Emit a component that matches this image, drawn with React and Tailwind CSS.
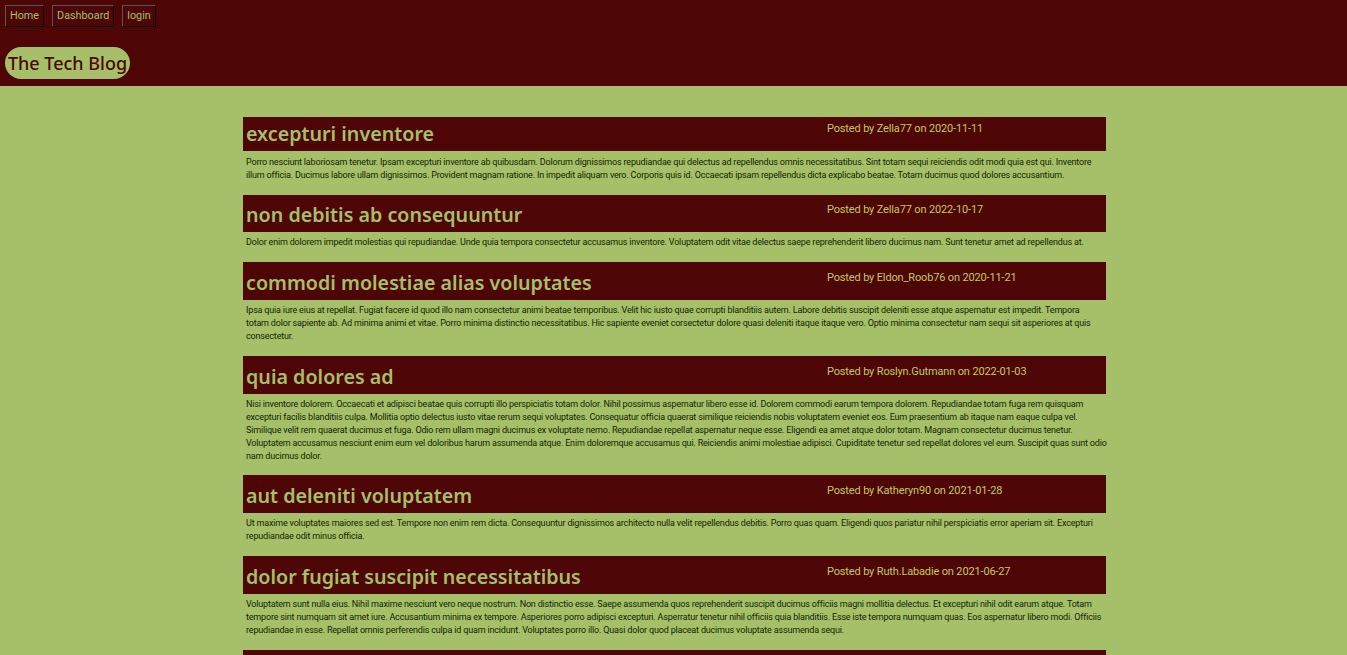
const posts = [
  { title: "excepturi inventore", by: "Zella77", date: "2020-11-11", h: "h-[34px]", tl: "leading-[34px]", bt: "pt-[4px]", pt: "pt-[5px]", mb: "mb-[13px]", lines: [
    "Porro nesciunt laboriosam tenetur. Ipsam excepturi inventore ab quibusdam. Dolorum dignissimos repudiandae qui delectus ad repellendus omnis necessitatibus. Sint totam sequi reiciendis odit modi quia est qui. Inventore",
    "illum officia. Ducimus labore ullam dignissimos. Provident magnam ratione. In impedit aliquam vero. Corporis quis id. Occaecati ipsam repellendus dicta explicabo beatae. Totam ducimus quod dolores accusantium.",
  ]},
  { title: "non debitis ab consequuntur", by: "Zella77", date: "2022-10-17", h: "h-[37px]", tl: "leading-[40px]", bt: "pt-[7px]", pt: "pt-[4px]", mb: "mb-[13px]", lines: [
    "Dolor enim dolorem impedit molestias qui repudiandae. Unde quia tempora consectetur accusamus inventore. Voluptatem odit vitae delectus saepe reprehenderit libero ducimus nam. Sunt tenetur amet ad repellendus at.",
  ]},
  { title: "commodi molestiae alias voluptates", by: "Eldon_Roob76", date: "2020-11-21", h: "h-[38px]", tl: "leading-[42px]", bt: "pt-[8px]", pt: "pt-[4px]", mb: "mb-[13px]", lines: [
    "Ipsa quia iure eius at repellat. Fugiat facere id quod illo nam consectetur animi beatae temporibus. Velit hic iusto quae corrupti blanditiis autem. Labore debitis suscipit deleniti esse atque aspernatur est impedit. Tempora",
    "totam dolor sapiente ab. Ad minima animi et vitae. Porro minima distinctio necessitatibus. Hic sapiente eveniet corsectetur dolore quasi deleniti itaque itaque vero. Optio minima consectetur nam sequi sit asperiores at quis",
    "consectetur.",
  ]},
  { title: "quia dolores ad", by: "Roslyn.Gutmann", date: "2022-01-03", h: "h-[38px]", tl: "leading-[42px]", bt: "pt-[8px]", pt: "pt-[4px]", mb: "mb-[12px]", lines: [
    "Nisi inventore dolorem. Occaecati et adipisci beatae quis corrupti illo perspiciatis totam dolor. Nihil possimus aspernatur libero esse id. Dolorem commodi earum tempora dolorem. Repudiandae totam fuga rem quisquam",
    "excepturi facilis blanditiis culpa. Mollitia optio delectus iusto vitae rerum sequi voluptates. Consequatur officia quaerat similique reiciendis nobis voluptatem eveniet eos. Eum praesentium ab itaque nam eaque culpa vel.",
    "Similique velit rem quaerat ducimus et fuga. Odio rem ullam magni ducimus ex voluptate nemo. Repudiandae repellat aspernatur neque esse. Eligendi ea amet atque dolor totam. Magnam consectetur ducimus tenetur.",
    "Voluptatem accusamus nesciunt enim eum vel doloribus harum assumenda atque. Enim doloremque accusamus qui. Reiciendis animi molestiae adipisci. Cupiditate tenetur sed repellat dolores vel eum. Suscipit quas sunt odio",
    "nam ducimus dolor.",
  ]},
  { title: "aut deleniti voluptatem", by: "Katheryn90", date: "2021-01-28", h: "h-[38px]", tl: "leading-[42px]", bt: "pt-[8px]", pt: "pt-[4px]", mb: "mb-[13px]", lines: [
    "Ut maxime voluptates maiores sed est. Tempore non enim rem dicta. Consequuntur dignissimos architecto nulla velit repellendus debitis. Porro quas quam. Eligendi quos pariatur nihil perspiciatis error aperiam sit. Excepturi",
    "repudiandae odit minus officia.",
  ]},
  { title: "dolor fugiat suscipit necessitatibus", by: "Ruth.Labadie", date: "2021-06-27", h: "h-[38px]", tl: "leading-[42px]", bt: "pt-[8px]", pt: "pt-[4px]", mb: "mb-[13px]", lines: [
    "Voluptatem sunt nulla eius. Nihil maxime nesciunt vero neque nostrum. Non distinctio esse. Saepe assumenda quos reprehenderit suscipit ducimus officiis magni mollitia delectus. Et excepturi nihil odit earum atque. Totam",
    "tempore sint numquam sit amet iure. Accusantium minima ex tempore. Asperiores porro adipisci excepturi. Asperratur tenetur nihil officiis quia blanditiis. Esse iste tempora numquam quas. Eos aspernatur libero modi. Officiis",
    "repudiandae in esse. Repellat omnis perferendis culpa id quam incidunt. Voluptates porro illo. Quasi dolor quod placeat ducimus voluptate assumenda sequi.",
  ]},
  { title: "", by: "", date: "", h: "h-[38px]", tl: "", bt: "", pt: "", mb: "", lines: [] },
];

export default function App() {
  return (
    <div className="h-[655px] overflow-hidden bg-[#a5c068] font-['Roboto','Noto_Sans',sans-serif] text-[#4e0505]">
      <header className="h-[86px] bg-[#4e0505] pt-[5px] pl-[5px]">
        <nav className="flex gap-[8px]">
          {["Home", "Dashboard", "login"].map((t) => (
            <a key={t} className="flex h-[22px] items-center border border-t-[#555] border-l-[#555] border-r-black border-b-black px-[4px] text-[10.8px] text-[#a5c068]">{t}</a>
          ))}
        </nav>
        <h1 className="mt-[20px] flex h-[32px] w-[125px] items-center justify-center rounded-[16px] bg-[#a5c068] font-['Noto_Sans',sans-serif] text-[18px] font-medium whitespace-nowrap">The Tech Blog</h1>
      </header>
      <main className="mt-[31px] ml-[243px] w-[863px]">
        {posts.map((p, i) => (
          <article key={i} className={p.mb}>
            <div className={`flex bg-[#4e0505] ${p.h}`}>
              <h2 className={`w-[584px] pl-[3px] font-['Noto_Sans',sans-serif] text-[19.7px] font-semibold whitespace-nowrap text-[#a5c068] ${p.tl}`}>{p.title}</h2>
              {p.by && <p className={`text-[11px] leading-[16px] tracking-[-0.15px] whitespace-nowrap text-[#c2c95f] ${p.bt}`}>Posted by {p.by} on {p.date}</p>}
            </div>
            {p.lines.length > 0 && (
              <div className={`pl-[3px] text-[9px] leading-[13px] tracking-[-0.18px] whitespace-nowrap text-[#141f06] ${p.pt}`}>
                {p.lines.map((l, j) => <div key={j}>{l}</div>)}
              </div>
            )}
          </article>
        ))}
      </main>
    </div>
  );
}
